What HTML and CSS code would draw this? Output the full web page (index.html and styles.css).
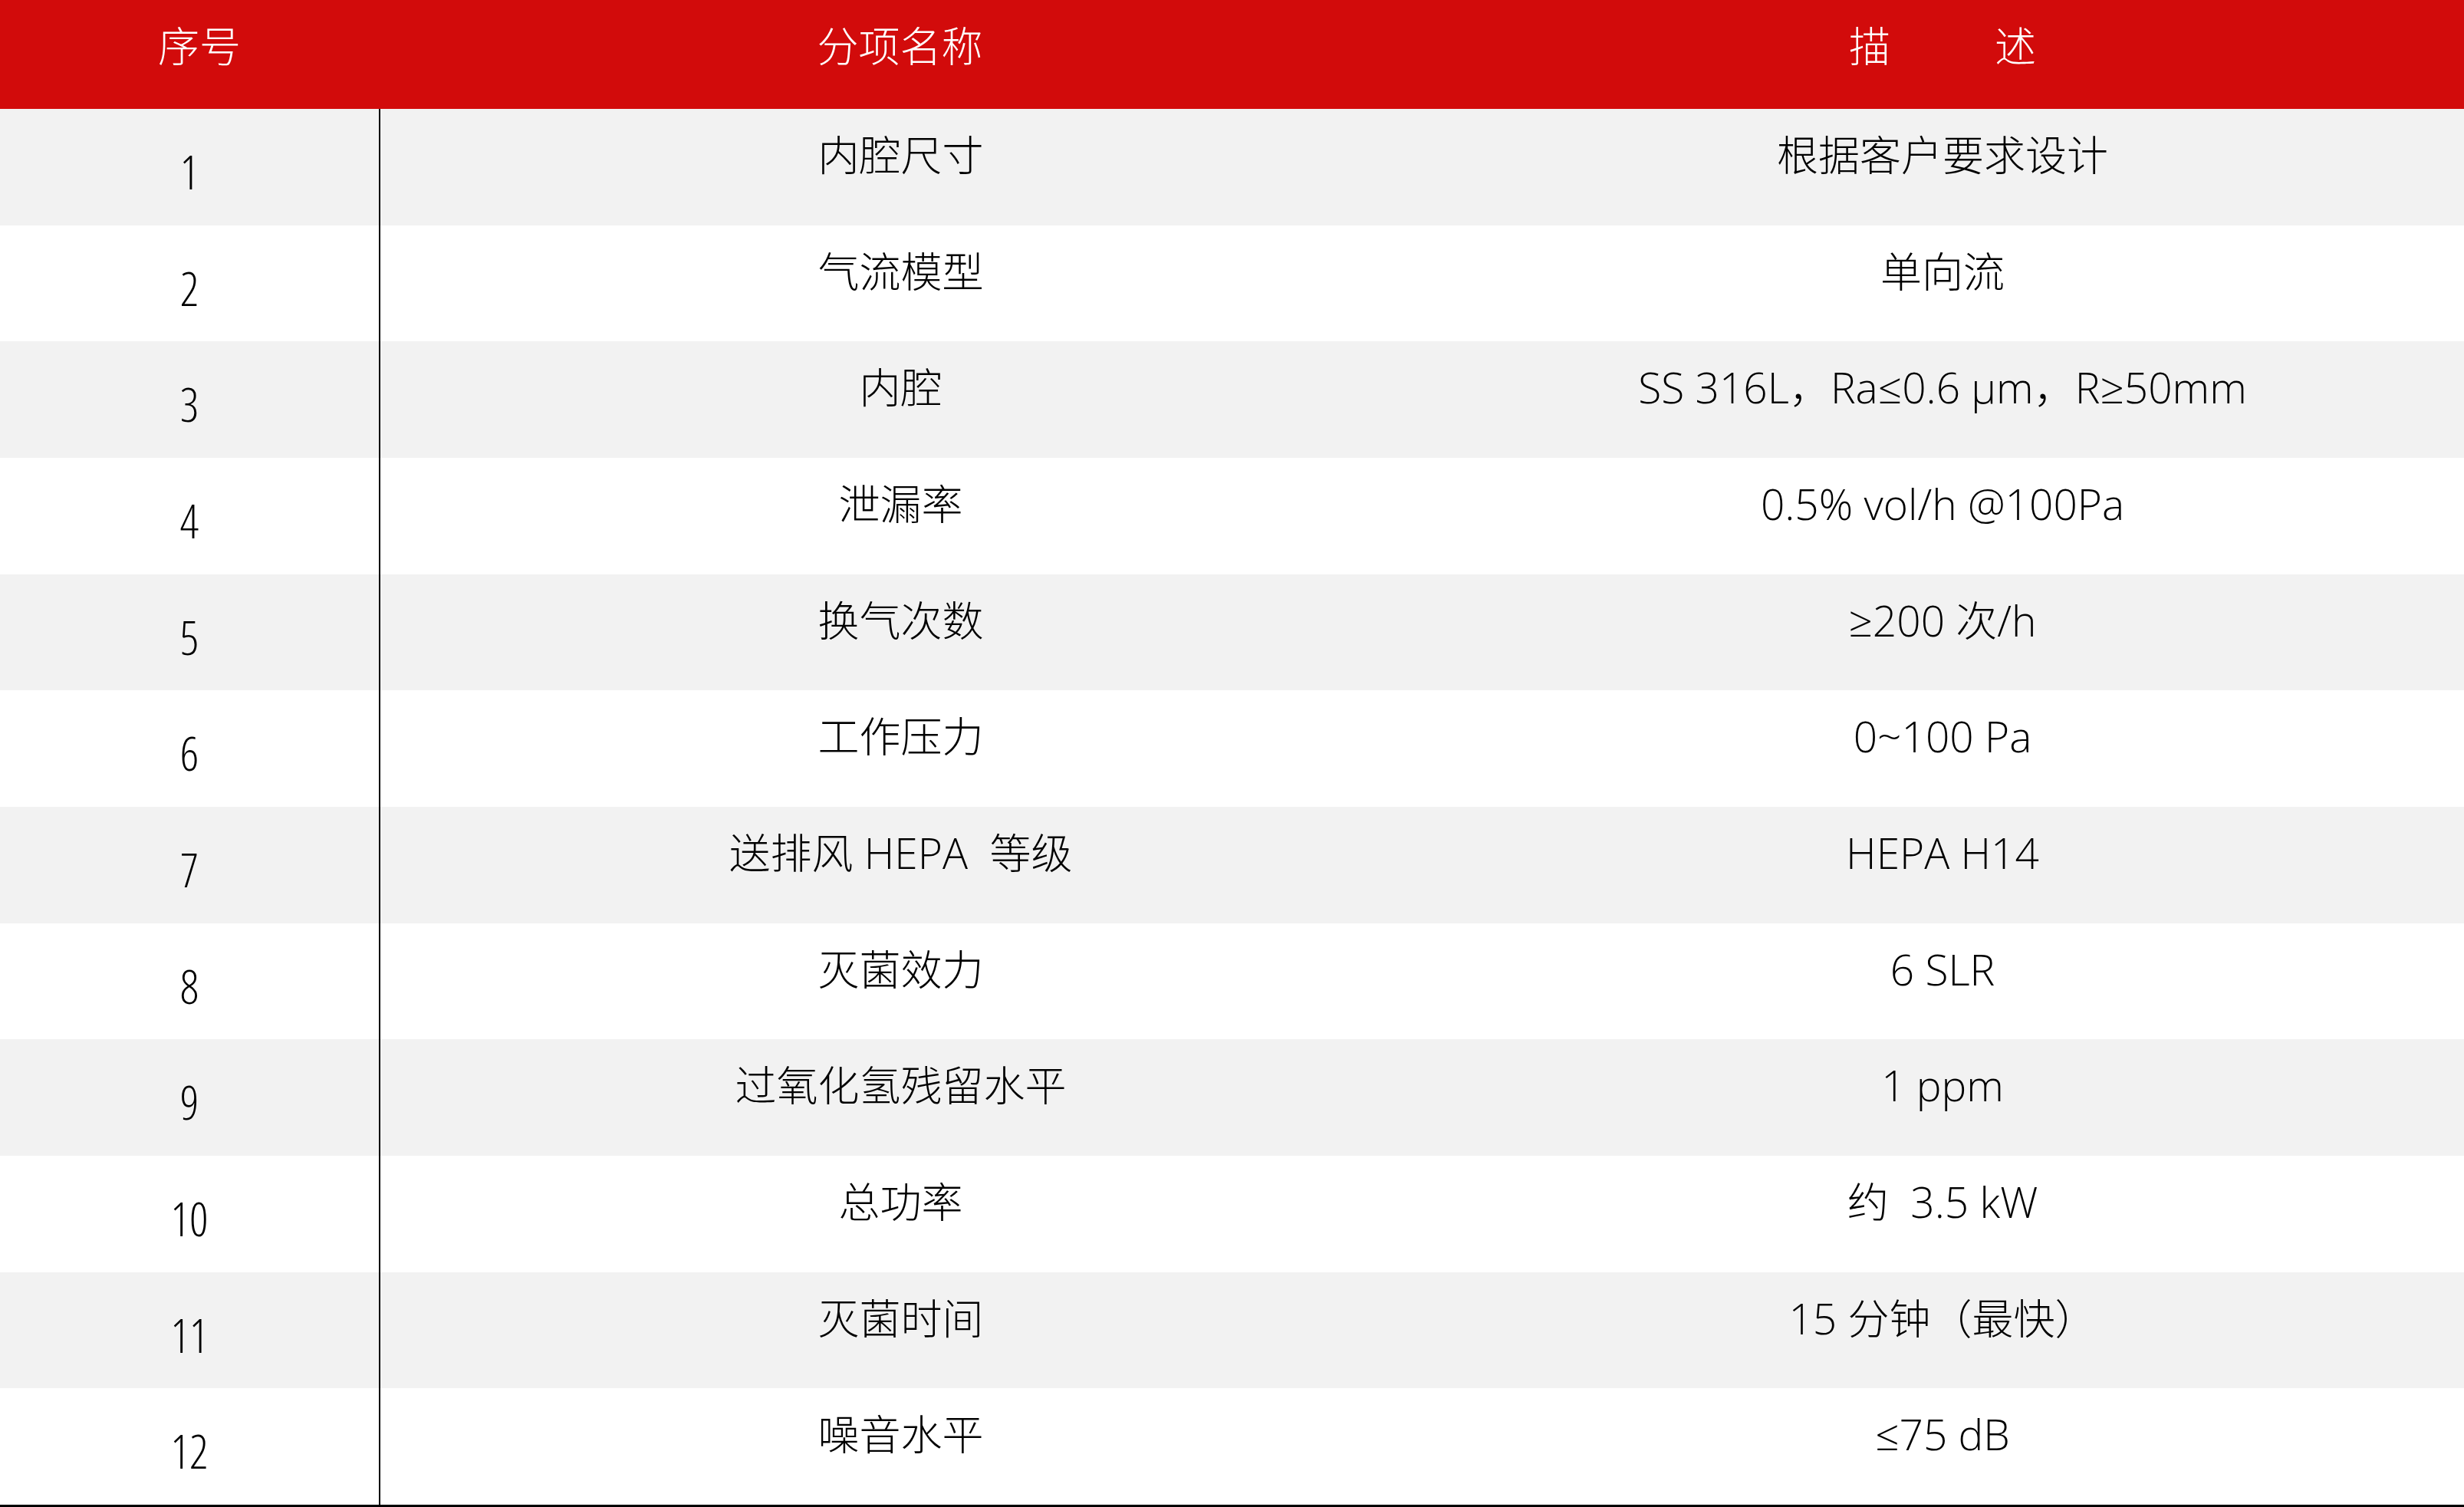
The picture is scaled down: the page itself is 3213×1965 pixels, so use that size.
FILE: index.html
```html
<!DOCTYPE html>
<html lang="zh-CN">
<head>
<meta charset="utf-8">
<title>技术参数</title>
<link rel="stylesheet" href="styles.css">
</head>
<body>
<div class="table">
  <div class="row head">
    <div class="cell hnum">序号</div>
    <div class="cell hname">分项名称</div>
    <div class="cell hdesc"><span>描</span><span>述</span></div>
  </div>
  <div class="row alt">
    <div class="cell num">1</div>
    <div class="cell name">内腔尺寸</div>
    <div class="cell desc">根据客户要求设计</div>
  </div>
  <div class="row">
    <div class="cell num">2</div>
    <div class="cell name">气流模型</div>
    <div class="cell desc">单向流</div>
  </div>
  <div class="row alt">
    <div class="cell num">3</div>
    <div class="cell name">内腔</div>
    <div class="cell desc"><span class="en">SS 316L</span>，<span class="en">Ra≤0.6 μm</span>，<span class="en">R≥50mm</span></div>
  </div>
  <div class="row">
    <div class="cell num">4</div>
    <div class="cell name">泄漏率</div>
    <div class="cell desc"><span class="en">0.5% vol/h @100Pa</span></div>
  </div>
  <div class="row alt">
    <div class="cell num">5</div>
    <div class="cell name">换气次数</div>
    <div class="cell desc"><span class="en">≥200 </span>次<span class="en">/h</span></div>
  </div>
  <div class="row">
    <div class="cell num">6</div>
    <div class="cell name">工作压力</div>
    <div class="cell desc"><span class="en">0~100 Pa</span></div>
  </div>
  <div class="row alt">
    <div class="cell num">7</div>
    <div class="cell name">送排风<span class="en"> HEPA&nbsp; </span>等级</div>
    <div class="cell desc"><span class="en">HEPA H14</span></div>
  </div>
  <div class="row">
    <div class="cell num">8</div>
    <div class="cell name">灭菌效力</div>
    <div class="cell desc"><span class="en">6 SLR</span></div>
  </div>
  <div class="row alt">
    <div class="cell num">9</div>
    <div class="cell name">过氧化氢残留水平</div>
    <div class="cell desc"><span class="en">1 ppm</span></div>
  </div>
  <div class="row">
    <div class="cell num">10</div>
    <div class="cell name">总功率</div>
    <div class="cell desc">约<span class="en">&nbsp; 3.5 kW</span></div>
  </div>
  <div class="row alt">
    <div class="cell num">11</div>
    <div class="cell name">灭菌时间</div>
    <div class="cell desc"><span class="en">15 </span>分钟（最快）</div>
  </div>
  <div class="row">
    <div class="cell num">12</div>
    <div class="cell name">噪音水平</div>
    <div class="cell desc"><span class="en">≤75 dB</span></div>
  </div>
</div>
</body>
</html>
```

FILE: styles.css
```css
* {
  box-sizing: border-box;
}

html, body {
  margin: 0;
  padding: 0;
  background: #ffffff;
}

.table {
  width: 3213px;
  border-bottom: 3px solid #000000;
}

.row {
  display: grid;
  grid-template-columns: 494px 1359px 1360px;
  height: 151.667px;
  background: #ffffff;
}

.row.alt {
  background: #f2f2f2;
}

.row.head {
  height: 142px;
  background: #d20b0b;
  color: #ffffff;
}

.cell {
  text-align: center;
  font-family: "Noto Sans CJK SC", "Noto Sans", sans-serif;
  font-weight: 300;
  font-size: 54px;
  line-height: 60px;
  padding-top: 28px;
  color: #000000;
  white-space: nowrap;
}

.head .cell {
  color: #ffffff;
  padding-top: 28px;
}

.hnum {
  padding-left: 26px;
}

.hdesc {
  display: flex;
  justify-content: center;
  gap: 136px;
}

.name {
  border-left: 2px solid #000000;
}

.en {
  font-family: "Open Sans", "Noto Sans CJK SC", sans-serif;
  font-weight: 300;
  font-size: 55px;
}

.num {
  font-family: "Open Sans", sans-serif;
  font-weight: 300;
  font-size: 60px;
  font-stretch: 87.5%;
  padding-top: 52px;
}
```
